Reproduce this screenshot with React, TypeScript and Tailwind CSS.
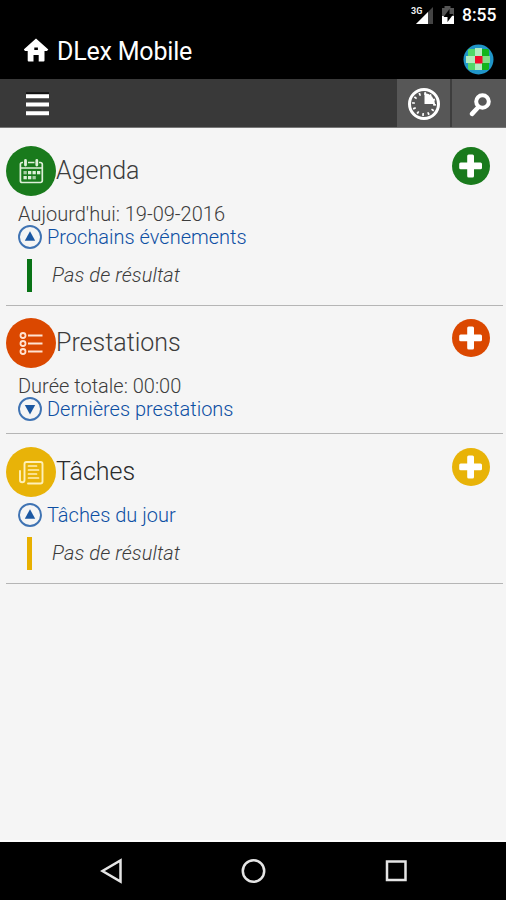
import React from "react";

function PlusButton({ color }: { color: string }) {
  return (
    <svg className="mt-px h-[38px] w-[38px] shrink-0" viewBox="0 0 38 38">
      <circle cx="19" cy="19" r="19" fill={color} />
      <rect x="15.2" y="7.5" width="6.8" height="23" rx="1.5" fill="#fff" />
      <rect x="7.2" y="15.5" width="22.8" height="6.8" rx="1.5" fill="#fff" />
    </svg>
  );
}

function CalendarIcon() {
  return (
    <svg className="h-[50px] w-[50px]" viewBox="0 0 50 50" fill="none" stroke="#dff0da" strokeWidth="1.7">
      <path d="M17 16.5h-.8a1.8 1.8 0 0 0-1.8 1.8v16.4a1.8 1.8 0 0 0 1.8 1.8h18.3a1.8 1.8 0 0 0 1.8-1.8V18.3a1.8 1.8 0 0 0-1.8-1.8H33M22 16.5h6.5M14.5 22h21.5" />
      <path d="M19.5 14.5v4.5M30.8 14.5v4.5" strokeWidth="2.8" strokeLinecap="round" />
      <g fill="#dff0da" stroke="none">
        <rect x="22" y="25" width="3.3" height="3.3" />
        <rect x="26.5" y="25" width="3.3" height="3.3" />
        <rect x="31" y="25" width="3.3" height="3.3" />
        <rect x="17.5" y="25" width="3.3" height="3.3" opacity=".7" />
        <rect x="17.5" y="30" width="3.3" height="3.3" />
        <rect x="22" y="30" width="3.3" height="3.3" />
        <rect x="26.5" y="30" width="3.3" height="3.3" opacity=".7" />
      </g>
    </svg>
  );
}

function ListIcon() {
  return (
    <svg className="h-[50px] w-[50px]" viewBox="0 0 50 50" fill="none" stroke="#ffe3d2" strokeWidth="1.8">
      <circle cx="17" cy="17.5" r="2.5" />
      <circle cx="17" cy="25.5" r="2.5" />
      <circle cx="17" cy="33.5" r="2.5" />
      <path d="M22 17.5h14.5M22 25.5h14.5M22 33.5h14.5" />
    </svg>
  );
}

function NewsIcon() {
  return (
    <svg className="h-[50px] w-[50px]" viewBox="0 0 50 50" fill="none" stroke="#fff0b8" strokeWidth="1.9" strokeLinejoin="round" strokeLinecap="round">
      <path d="M18.5 33V17a2 2 0 0 1 2-2h14a2 2 0 0 1 2 2v17.5a2 2 0 0 1-2 2H22M18.5 33a2.2 2.2 0 0 1-4.5 0v-9" />
      <path d="M22.5 19h8M22.5 23h10M22.5 27h8M22.5 31h10" strokeWidth="1.7" />
    </svg>
  );
}

function Toggle({ up }: { up?: boolean }) {
  return (
    <svg className="h-6 w-6 shrink-0" viewBox="0 0 24 24">
      <circle cx="12" cy="12" r="11" fill="none" stroke="#3f73b3" strokeWidth="1.9" />
      <path d={up ? "M12 6.2 17.2 15.8H6.8Z" : "M12 17.5 6.8 8h10.4Z"} fill="#1c58a2" />
    </svg>
  );
}

function Heading({ icon, color, title, titleColor }: { icon: React.ReactNode; color: string; title: string; titleColor: string }) {
  return (
    <header className="mr-[13px] flex h-[50px] items-start">
      <div className="h-[50px] w-[50px] shrink-0 rounded-full" style={{ backgroundColor: color }}>{icon}</div>
      <h2 className={`grow whitespace-nowrap text-[25px] leading-[50px] font-light ${titleColor}`}>{title}</h2>
      <PlusButton color={color} />
    </header>
  );
}

function LinkRow({ up, label }: { up?: boolean; label: string }) {
  return (
    <div className="ml-3 flex h-6 items-center gap-[5px]">
      <Toggle up={up} />
      <a className="whitespace-nowrap text-[20px] leading-6 font-light text-[#0d4fa3]">{label}</a>
    </div>
  );
}

function EmptyResult({ color }: { color: string }) {
  return (
    <div className="mt-[10px] ml-[21px] flex h-[33px]">
      <div className="w-[5px]" style={{ backgroundColor: color }} />
      <p className="ml-[20px] whitespace-nowrap text-[20px] leading-[33px] font-light tracking-[0.1px] text-[#3c3c3c] italic">Pas de résultat</p>
    </div>
  );
}

export default function App() {
  return (
    <div className="flex h-[900px] w-[506px] flex-col overflow-hidden bg-[#f5f5f5] font-['Roboto','Liberation_Sans',sans-serif]">
      <div className="flex h-[30px] shrink-0 items-center justify-end bg-black pr-[9px] text-white">
        <svg className="h-[30px] w-[50px]" viewBox="0 0 50 30">
          <text x="2" y="14" fontSize="9" fontWeight="700" fill="#eee">3G</text>
          <path d="M24 7v17H7Z" fill="#444" />
          <path d="M19 12v12H7Z" fill="#fff" />
          <path d="M33 8h2.5V6h6v2H45v16H33V8Z" fill="#555" />
          <path d="M33 16h12v8H33Z" fill="#fff" />
          <path d="m40.5 9-6 8h4v5l6-8h-4Z" fill="#000" />
        </svg>
        <span className="ml-[3px] w-[35px] whitespace-nowrap text-[17.5px] leading-[32px] font-medium">8:55</span>
      </div>

      <header className="flex h-[49px] shrink-0 items-center bg-black pr-[12px] pl-6 text-white">
        <svg className="mb-[9px] h-[25px] w-[25px]" viewBox="0 0 25 25">
          <path fillRule="evenodd" d="M12 .5 24.3 11.5 23 13h-2.500v9.500a1 1 0 0 1-1 1h-4.800v-6.500h-5.200v6.500H4.700a1 1 0 0 1-1-1V13H1L-.2 11.500ZM10.300 9.500v2.600h3.600V9.500Z" fill="#fff" />
        </svg>
        <h1 className="mb-[6px] ml-[8px] grow text-[25px] leading-[42px] font-normal tracking-[-0.2px] whitespace-nowrap">DLex Mobile</h1>
        <svg className="mt-[9px] h-[31px] w-[31px]" viewBox="0 0 31 31">
          <defs><clipPath id="globe"><circle cx="15.5" cy="15.5" r="14" /></clipPath></defs>
          <circle cx="15.5" cy="15.5" r="15" fill="#2095c8" />
          <g clipPath="url(#globe)">
            <path d="M5 5h7v7H5ZM5 19h7v7H5Z" fill="#52d86a" />
            <path d="M19 5h7v7h-7ZM19 19h7v7h-7Z" fill="#12b51c" />
            <path d="M12 4h7v8h-7ZM3 12h9v7H3ZM12 19h7v7h-7Z" fill="#b2edc0" />
            <path d="M19 12h8v7h-8Z" fill="#83df88" />
            <rect x="12" y="12" width="7.5" height="7.5" fill="#f20a2c" />
          </g>
        </svg>
      </header>

      <nav className="flex h-[49px] shrink-0 border-b border-[#777] bg-[#393939]">
        <div className="grow">
          <svg className="h-[48px] w-[60px]" viewBox="0 0 60 48">
            <path d="M26 14.2h23" stroke="#111" strokeWidth="2" />
            <path d="M26 17.2h23M26 25.5h23M26 34.2h23" stroke="#fff" strokeWidth="4" />
          </svg>
        </div>
        <div className="w-[55px] border-r-2 border-[#3d3d3d] bg-[#575757]">
          <svg className="h-[48px] w-[54px]" viewBox="0 0 54 48">
            <circle cx="27" cy="25" r="14.5" fill="none" stroke="#fff" strokeWidth="3" />
            <circle cx="27" cy="25" r="10.5" fill="none" stroke="#fff" strokeWidth="2.8" strokeDasharray="1.7 3.798" />
            <path d="M27.5 25V14a11 11 0 0 1 10.5 11Z" fill="#fff" />
          </svg>
        </div>
        <div className="w-[54px] bg-[#575757]">
          <svg className="h-[48px] w-[54px]" viewBox="0 0 54 48">
            <circle cx="30.5" cy="22.5" r="6.3" fill="none" stroke="#fff" strokeWidth="4" />
            <path d="m26 28.5-6 6.3" stroke="#fff" strokeWidth="4.6" strokeLinecap="round" />
          </svg>
        </div>
      </nav>

      <main className="grow pr-[3px] pl-[6px]">
        <section className="h-[178px] border-b border-[#b5b5b5] pt-[18px]">
          <Heading icon={<CalendarIcon />} color="#197a1c" title="Agenda" titleColor="text-[#3c3c3c]" />
          <p className="mt-[6px] ml-3 h-[23px] text-[20px] leading-6 font-light whitespace-nowrap text-[#3c3c3c]">Aujourd'hui: 19-09-2016</p>
          <LinkRow up label="Prochains événements" />
          <EmptyResult color="#087316" />
        </section>
        <section className="h-[128px] border-b border-[#b5b5b5] pt-[12px]">
          <Heading icon={<ListIcon />} color="#db4800" title="Prestations" titleColor="text-[#3c3c3c]" />
          <p className="mt-[6px] ml-3 h-[23px] text-[20px] leading-6 font-light whitespace-nowrap text-[#3c3c3c]">Durée totale: 00:00</p>
          <LinkRow label="Dernières prestations" />
        </section>
        <section className="h-[150px] border-b border-[#b5b5b5] pt-[13px]">
          <Heading icon={<NewsIcon />} color="#e8b308" title="Tâches" titleColor="text-[#2b2b2b]" />
          <div className="mt-[6px]"><LinkRow up label="Tâches du jour" /></div>
          <EmptyResult color="#e8b000" />
        </section>
      </main>

      <div className="h-[2px] shrink-0 bg-white" />
      <footer className="h-[58px] shrink-0 bg-black">
        <svg className="h-[58px] w-[506px]" viewBox="0 842 506 58" fill="none" stroke="#e5e5e5" strokeWidth="2.5">
          <path d="M120.5 860.5v21L102.5 871Z" />
          <circle cx="253.5" cy="871" r="10.7" />
          <rect x="387" y="861.5" width="18.5" height="18.5" />
        </svg>
      </footer>
    </div>
  );
}
